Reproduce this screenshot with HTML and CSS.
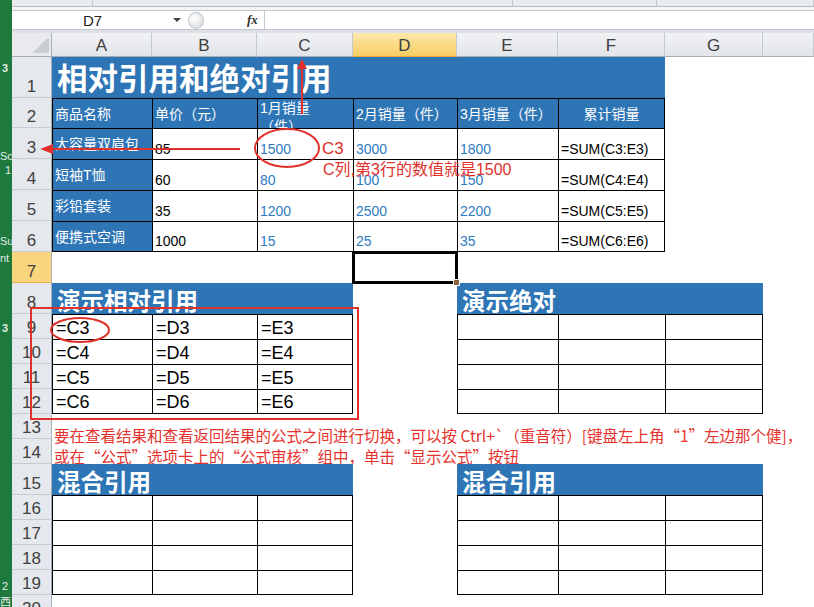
FILE: index.html
```html
<!DOCTYPE html>
<html lang="zh-CN">
<head>
    <meta charset="UTF-8">
    <title>相对引用和绝对引用</title>
    <link rel="stylesheet" href="styles.css">
</head>
<body>
<div class="app">
    <!-- window behind the workbook, only its edge shows -->
    <div class="dock">
        <span class="d1">3</span>
        <span class="d2">Sc</span>
        <span class="d3">1</span>
        <span class="d4">Su</span>
        <span class="d5">nt</span>
        <span class="d6">3</span>
        <span class="d7">2</span>
        <span class="d8">西</span>
    </div>

    <div class="main">
        <div class="ribbon">
            <div class="rb1"><span>Normal</span></div>
            <div class="rb2"><span>Bad</span></div>
            <div class="rb3"><span>Good</span></div>
            <div class="rb4"><span>Neutral</span></div>
        </div>

        <div class="fbar">
            <div class="fbox">
                <div class="namebox">D7<span class="caret"></span></div>
                <span class="knob"></span>
                <span class="fx">fx</span>
                <span class="fx-sep"></span>
            </div>
        </div>

        <div class="sheet">
            <!-- column headers -->
            <div class="corner"></div>
            <div class="hd">A</div>
            <div class="hd">B</div>
            <div class="hd">C</div>
            <div class="hd on">D</div>
            <div class="hd">E</div>
            <div class="hd">F</div>
            <div class="hd">G</div>
            <div class="hd"></div>

            <!-- 1 -->
            <div class="rh">1</div>
            <div class="blue title">相对引用和绝对引用</div>
            <div></div><div></div>

            <!-- 2 -->
            <div class="rh">2</div>
            <div class="blue bd mid">商品名称</div>
            <div class="blue bd mid">单价（元）</div>
            <div class="blue bd wrap">1月销量（件）</div>
            <div class="blue bd mid">2月销量（件）</div>
            <div class="blue bd mid">3月销量（件）</div>
            <div class="blue bd br mid ctr">累计销量</div>
            <div></div><div></div>

            <!-- 3 -->
            <div class="rh">3</div>
            <div class="blue bd mid">大容量双肩包</div>
            <div class="bd">85</div>
            <div class="bd val">1500</div>
            <div class="bd val">3000</div>
            <div class="bd val">1800</div>
            <div class="bd br">=SUM(C3:E3)</div>
            <div></div><div></div>

            <!-- 4 -->
            <div class="rh">4</div>
            <div class="blue bd mid">短袖T恤</div>
            <div class="bd">60</div>
            <div class="bd val">80</div>
            <div class="bd val">100</div>
            <div class="bd val">150</div>
            <div class="bd br">=SUM(C4:E4)</div>
            <div></div><div></div>

            <!-- 5 -->
            <div class="rh">5</div>
            <div class="blue bd mid">彩铅套装</div>
            <div class="bd">35</div>
            <div class="bd val">1200</div>
            <div class="bd val">2500</div>
            <div class="bd val">2200</div>
            <div class="bd br">=SUM(C5:E5)</div>
            <div></div><div></div>

            <!-- 6 -->
            <div class="rh">6</div>
            <div class="blue bd bb mid">便携式空调</div>
            <div class="bd bb">1000</div>
            <div class="bd bb val">15</div>
            <div class="bd bb val">25</div>
            <div class="bd bb val">35</div>
            <div class="bd bb br">=SUM(C6:E6)</div>
            <div></div><div></div>

            <!-- 7 -->
            <div class="rh on">7</div>
            <div></div><div></div><div></div>
            <div class="active"></div>
            <div></div><div></div><div></div><div></div>

            <!-- 8 -->
            <div class="rh">8</div>
            <div class="blue sec">演示相对引用</div>
            <div></div>
            <div class="blue sec">演示绝对</div>
            <div></div>

            <!-- 9 - 12 -->
            <div class="rh">9</div>
            <div class="bd ref">=C3</div><div class="bd ref">=D3</div><div class="bd br ref">=E3</div>
            <div></div>
            <div class="bd"></div><div class="bd"></div><div class="bd br"></div>
            <div></div>

            <div class="rh">10</div>
            <div class="bd ref">=C4</div><div class="bd ref">=D4</div><div class="bd br ref">=E4</div>
            <div></div>
            <div class="bd"></div><div class="bd"></div><div class="bd br"></div>
            <div></div>

            <div class="rh">11</div>
            <div class="bd ref">=C5</div><div class="bd ref">=D5</div><div class="bd br ref">=E5</div>
            <div></div>
            <div class="bd"></div><div class="bd"></div><div class="bd br"></div>
            <div></div>

            <div class="rh">12</div>
            <div class="bd bb ref">=C6</div><div class="bd bb ref">=D6</div><div class="bd bb br ref">=E6</div>
            <div></div>
            <div class="bd bb"></div><div class="bd bb"></div><div class="bd bb br"></div>
            <div></div>

            <!-- 13, 14 -->
            <div class="rh">13</div>
            <div class="tip tip1">要在查看结果和查看返回结果的公式之间进行切换，可以按 Ctrl+`（重音符）[键盘左上角“1”左边那个健]，</div>

            <div class="rh">14</div>
            <div class="tip tip2">或在“公式”选项卡上的“公式审核”组中，单击“显示公式”按钮</div>

            <!-- 15 -->
            <div class="rh">15</div>
            <div class="blue sec">混合引用</div>
            <div></div>
            <div class="blue sec">混合引用</div>
            <div></div>

            <!-- 16 - 19 -->
            <div class="rh">16</div>
            <div class="bd"></div><div class="bd"></div><div class="bd br"></div>
            <div></div>
            <div class="bd"></div><div class="bd"></div><div class="bd br"></div>
            <div></div>

            <div class="rh">17</div>
            <div class="bd"></div><div class="bd"></div><div class="bd br"></div>
            <div></div>
            <div class="bd"></div><div class="bd"></div><div class="bd br"></div>
            <div></div>

            <div class="rh">18</div>
            <div class="bd"></div><div class="bd"></div><div class="bd br"></div>
            <div></div>
            <div class="bd"></div><div class="bd"></div><div class="bd br"></div>
            <div></div>

            <div class="rh">19</div>
            <div class="bd bb"></div><div class="bd bb"></div><div class="bd bb br"></div>
            <div></div>
            <div class="bd bb"></div><div class="bd bb"></div><div class="bd bb br"></div>
            <div></div>

            <div class="rh">20</div>
            <div class="rest"></div>
        </div>
    </div>
</div>

<!-- hand drawn marks on top of the sheet -->
<svg class="marks" width="814" height="607" viewBox="0 0 814 607">
    <g fill="none" stroke="#e0312b" stroke-width="2">
        <ellipse cx="287" cy="148" rx="32" ry="19"/>
        <line x1="240" y1="149" x2="50" y2="149"/>
        <line x1="302" y1="114" x2="302" y2="67"/>
        <rect x="31" y="308" width="327" height="111"/>
        <ellipse cx="80" cy="330" rx="29" ry="12"/>
    </g>
    <g fill="#e0312b">
        <path d="M40 149 L53 144 L53 154 Z"/>
        <path d="M302 59 L297 69 L307 69 Z"/>
    </g>
</svg>
<span class="note note-c3">C3</span>
<span class="note note-desc">C列,第3行的数值就是1500</span>
</body>
</html>
```

FILE: styles.css
```css
* { box-sizing: border-box; }
body {
    margin: 0; width: 814px; height: 607px; overflow: hidden; position: relative; background: #fff;
    font-family: "Liberation Sans", "Noto Sans CJK SC", sans-serif; color: #000;
}
.app { display: flex; height: 607px; }

/* green edge on the left */
.dock { width: 12px; flex: none; background: #1d7a3c; overflow: hidden; color: #e4ebe6; font-size: 11px; line-height: 12px; }
.dock span { display: block; white-space: nowrap; }
.d1 { margin-top: 62px; padding-left: 2px; font-weight: bold; }
.d2 { margin-top: 76px; }
.d3 { margin-top: 2px; padding-left: 5px; }
.d4 { margin-top: 59px; }
.d5 { margin-top: 5px; }
.d6 { margin-top: 58px; padding-left: 2px; font-weight: bold; }
.d7 { margin-top: 246px; padding-left: 2px; }
.d8 { margin-top: 4px; }

.main { flex: 1; display: flex; flex-direction: column; overflow: hidden; }
.main > div { flex: none; }

/* bottom of the ribbon */
.ribbon { height: 7px; display: flex; background: #e9ebee; border-bottom: 1px solid #b6bcc3; overflow: hidden; }
.ribbon div { overflow: hidden; border-right: 1px solid #c6cbd1; text-align: center; color: #8a8a8a; font-size: 12px; line-height: 12px; }
.ribbon span { display: block; margin-top: -11px; }
.rb1 { width: 81px; }
.rb2 { width: 420px; }
.rb3 { width: 144px; }
.rb4 { flex: 1; }

/* name box + formula bar */
.fbar { height: 26px; background: #f3f4f6; padding-top: 3px; border-bottom: 3px solid #dde0e4; }
.fbox { height: 20px; display: flex; align-items: center; background: #fff; border-top: 1px solid #c4c9cf; border-bottom: 1px solid #c4c9cf; }
.namebox { width: 175px; height: 100%; display: flex; align-items: center; padding-left: 71px; font-size: 15px; color: #222; }
.caret { margin-left: auto; margin-right: 6px; width: 0; height: 0; border-left: 4px solid transparent; border-right: 4px solid transparent; border-top: 4px solid #444; }
.knob { margin-left: 1px; width: 16px; height: 17px; border-radius: 50%; border: 1px solid #c2c6cb; background: radial-gradient(circle at 35% 35%, #fff, #dfe2e6 70%); }
.fx { margin-left: 43px; font: italic bold 13px "Liberation Serif", serif; color: #333; }
.fx-sep { margin-left: 6px; width: 1px; height: 100%; background: #c4c9cf; }

/* worksheet grid */
.sheet {
    display: grid;
    grid-template-columns: 40px 100px 105px 96px 104px 101px 107px 98px 51px;
    grid-template-rows: 24px 41px 30px repeat(6, 31px) repeat(6, 25px) 31px repeat(5, 25px);
}
.sheet > div {
    display: flex; align-items: flex-end; min-width: 0; overflow: hidden; white-space: nowrap;
    padding: 0 2px 2px; font-size: 14px;
}

.corner {
    background: linear-gradient(135deg, transparent 50%, #c9cdd2 50%) no-repeat right 2px bottom 3px / 18px 14px, #e8eaed;
    border-right: 1px solid #a7aeb6; border-bottom: 1px solid #a7aeb6;
}
.sheet > .hd {
    justify-content: center; align-items: center; padding: 3px 0 0;
    background: linear-gradient(#f1f2f4, #e2e5e9);
    border-right: 1px solid #c3c8ce; border-bottom: 1px solid #a7aeb6;
    font-size: 17px; color: #404040;
}
.sheet > .hd.on { background: linear-gradient(#fde9ab, #f6cd62); border-bottom-color: #e9a93a; }
.sheet > .rh {
    justify-content: center; padding: 0;
    background: #e5e8ec; border-bottom: 1px solid #c6cbd1; border-right: 1px solid #a7aeb6;
    font-size: 17px; color: #404040;
}
.sheet > .rh.on { background: #f9d67e; border-bottom-color: #e4b54f; }

.blue { background: #2e75b6; color: #fff; }
.bd { border-left: 1px solid #000; border-top: 1px solid #000; }
.br { border-right: 1px solid #000; }
.bb { border-bottom: 1px solid #000; }
.sheet > .mid { align-items: center; }
.ctr { justify-content: center; }
.val { color: #2e7bc4; }
.sheet > .wrap { white-space: normal; align-items: flex-start; line-height: 18px; padding: 0 12px 0 2px; }

.sheet > .title { grid-column: span 6; align-items: center; padding: 0 0 2px 5px; font-size: 30.5px; font-weight: bold; }
.sheet > .sec { grid-column: span 3; align-items: center; padding: 2px 0 0 5px; font-size: 23.5px; font-weight: bold; }
.sheet > .ref { font-size: 18px; padding-left: 3px; padding-bottom: 0; }

.sheet > .tip {
    grid-column: span 8; overflow: visible; padding: 0 0 0 2px;
    font-family: "Noto Sans CJK SC", sans-serif; color: #e5322d; font-size: 15.5px;
}
.tip1 { line-height: 8px; }
.tip2 { line-height: 16px; }
.rest { grid-column: span 8; }

/* selected cell D7 */
.sheet > .active { position: relative; z-index: 1; overflow: visible; outline: 3px solid #000; outline-offset: -2px; }
.active::after { content: ""; position: absolute; right: -3px; bottom: -3px; width: 5px; height: 5px; background: #8a6440; border: 1px solid #fff; }

/* annotations */
.marks { position: absolute; left: 0; top: 0; pointer-events: none; z-index: 2; }
.note { position: absolute; z-index: 2; color: #e0312b; white-space: nowrap; line-height: 20px; }
.note-c3 { left: 322px; top: 139px; font-size: 17px; }
.note-desc { left: 323px; top: 160px; font-size: 16px; }
```
